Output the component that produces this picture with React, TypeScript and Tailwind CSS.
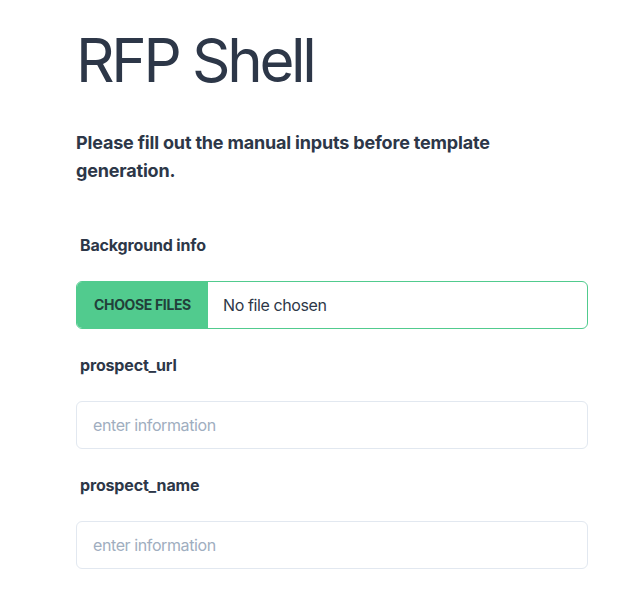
const fields = ["prospect_url", "prospect_name"];

function App() {
  return (
    <div className="min-h-screen bg-white font-['Inter',sans-serif] text-[#2d3748]">
      <div className="ml-[76px] w-[512px] pt-[30px]">
        <h1 className="text-[60px] leading-[60px] font-normal tracking-[-0.055em]">RFP Shell</h1>

        <p className="mt-[39px] text-lg leading-7 font-bold tracking-[-0.01em]">
          Please fill out the manual inputs before template generation.
        </p>

        <div className="mt-12 flex flex-col gap-6">
          <label className="pl-1 text-base leading-6 font-bold tracking-[-0.01em]">Background info</label>
          {/* file picker */}
          <label className="flex h-12 cursor-pointer items-stretch overflow-hidden rounded-md border border-[#51cb8e]">
            <input type="file" multiple className="hidden" />
            <span className="flex w-[131px] items-center justify-center bg-[#51cb8e] text-sm font-bold tracking-tight text-[#22403a]">
              CHOOSE FILES
            </span>
            <span className="flex items-center pl-[15px] text-base tracking-[-0.025em]">No file chosen</span>
          </label>

          {fields.map((name) => (
            <div key={name} className="flex flex-col gap-6">
              <label className="pl-1 text-base leading-6 font-bold tracking-[-0.01em]">{name}</label>
              <input
                type="text"
                placeholder="enter information"
                className="h-12 w-full rounded-md border border-[#e2e8f0] px-4 text-base tracking-[-0.025em] outline-none placeholder:text-[#a0aec0]"
              />
            </div>
          ))}
        </div>
      </div>
    </div>
  );
}

export default App;
